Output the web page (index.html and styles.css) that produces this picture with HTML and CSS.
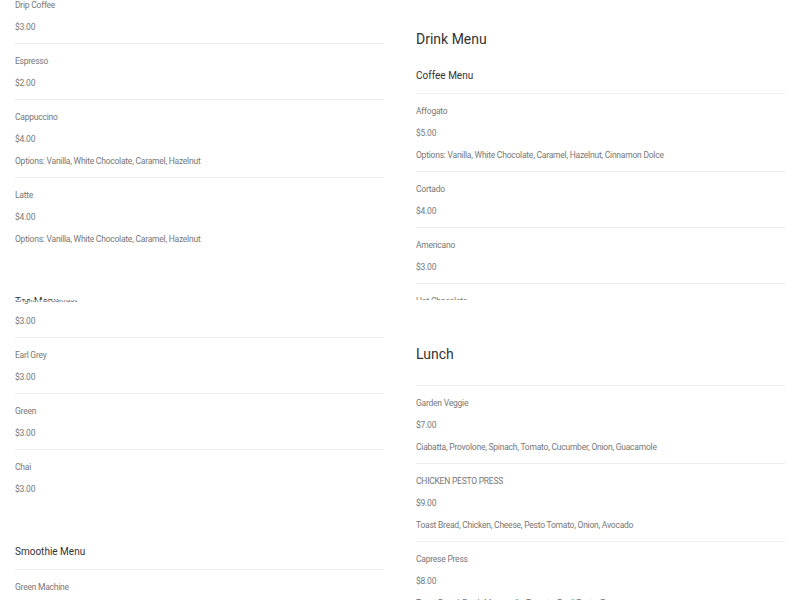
FILE: index.html
```html
<!DOCTYPE html>
<html>
<head>
<meta charset="utf-8">
<link rel="stylesheet" href="styles.css">
</head>
<body>
<div class="grid">
  <section class="panel">
    <div class="scroller scroller-coffee">
      <ul class="items">
        <li class="item"><p>Drip Coffee</p><p>$3.00</p></li>
        <li class="item"><p>Espresso</p><p>$2.00</p></li>
        <li class="item"><p>Cappuccino</p><p>$4.00</p><p>Options: Vanilla, White Chocolate, Caramel, Hazelnut</p></li>
        <li class="item"><p>Latte</p><p>$4.00</p><p>Options: Vanilla, White Chocolate, Caramel, Hazelnut</p></li>
      </ul>
      <div class="sub">
        <h3 class="sub-title">Tea Menu</h3>
        <ul class="items list-top">
          <li class="item"><p>English Breakfast</p><p>$3.00</p></li>
        </ul>
      </div>
    </div>
  </section>

  <section class="panel">
    <div class="scroller scroller-drink">
      <h2 class="menu-title">Drink Menu</h2>
      <h3 class="sub-title">Coffee Menu</h3>
      <ul class="items list-top">
        <li class="item"><p>Affogato</p><p>$5.00</p><p>Options: Vanilla, White Chocolate, Caramel, Hazelnut, Cinnamon Dolce</p></li>
        <li class="item"><p>Cortado</p><p>$4.00</p></li>
        <li class="item"><p>Americano</p><p>$3.00</p></li>
        <li class="item"><p>Hot Chocolate</p><p>$3.00</p></li>
      </ul>
    </div>
  </section>

  <section class="panel">
    <div class="scroller scroller-tea">
      <ul class="items">
        <li class="item"><p>English Breakfast</p><p>$3.00</p></li>
        <li class="item"><p>Earl Grey</p><p>$3.00</p></li>
        <li class="item"><p>Green</p><p>$3.00</p></li>
        <li class="item"><p>Chai</p><p>$3.00</p></li>
      </ul>
      <div class="sub">
        <h3 class="sub-title">Smoothie Menu</h3>
        <ul class="items list-top">
          <li class="item"><p>Green Machine</p><p>$6.00</p></li>
        </ul>
      </div>
    </div>
  </section>

  <section class="panel">
    <div class="scroller scroller-lunch">
      <h2 class="menu-title">Lunch</h2>
      <ul class="items list-top">
        <li class="item"><p>Garden Veggie</p><p>$7.00</p><p>Ciabatta, Provolone, Spinach, Tomato, Cucumber, Onion, Guacamole</p></li>
        <li class="item"><p>CHICKEN PESTO PRESS</p><p>$9.00</p><p>Toast Bread, Chicken, Cheese, Pesto Tomato, Onion, Avocado</p></li>
        <li class="item"><p>Caprese Press</p><p>$8.00</p><p>Toast Bread, Fresh Mozzarella, Tomato, Basil Pesto, Pecan</p></li>
      </ul>
    </div>
  </section>
</div>
</body>
</html>
```

FILE: styles.css
```css
* { box-sizing: border-box; }
html, body {
  margin: 0;
  padding: 0;
  background: #fff;
  font-family: Roboto, "Noto Sans", sans-serif;
}
.grid {
  display: grid;
  grid-template-columns: 1fr 1fr;
  grid-template-rows: 300px 300px;
  column-gap: 32px;
  padding: 0 15px;
  height: 600px;
}
.panel {
  overflow: hidden;
  height: 300px;
}
.scroller-coffee { margin-top: -12px; }
.scroller-tea { margin-top: -18px; }
.scroller-drink { padding-top: 31px; }
.scroller-lunch { padding-top: 46px; }

.menu-title {
  margin: 0 0 23px;
  font-size: 14px;
  line-height: 16px;
  font-weight: 400;
  color: #333;
}
.sub-title {
  margin: 0 0 11px;
  font-size: 10px;
  line-height: 12px;
  font-weight: 400;
  color: #333;
}
.sub { margin-top: 41px; }
.items {
  list-style: none;
  margin: 0;
  padding: 0;
}
.list-top { border-top: 1px solid #eeeeee; }
.item {
  padding: 12px 0 10px;
  border-bottom: 1px solid #eeeeee;
}
.item:last-child { border-bottom: none; }
.item p {
  margin: 0;
  font-size: 8.5px;
  line-height: 11px;
  letter-spacing: -0.23px;
  color: #777;
  white-space: nowrap;
}
.item p + p { margin-top: 11px; }
```
